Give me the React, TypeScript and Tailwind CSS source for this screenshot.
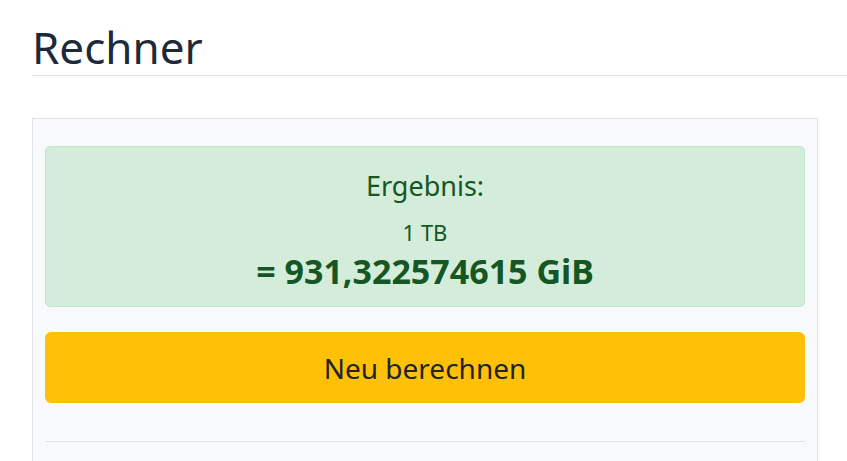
// ── Calculator result page ────────────────────────────────────────────────────
// Heading · result alert · recalculate button

const FONT = "font-['Noto_Sans','Open_Sans',sans-serif]";

export default function App() {
  return (
    <div className={`min-h-screen bg-white ${FONT} pl-8 pr-[29px] overflow-hidden`}>
      {/* ── Heading ── */}
      <h1 className="-mr-[29px] border-b border-[#dee2e6] pt-[19px] text-[44px] leading-[56px] text-[#1c2a3b] h-[76px]">
        Rechner
      </h1>

      {/* ── Card ── */}
      <div className="mt-[42px] border border-[#dee2e6] bg-[#f8f9fa] px-3 pt-[27px] pb-6">
        <div className="rounded-[5px] border border-[#c3e6cb] bg-[#d4edda] text-center text-[#155724] h-[161px] pt-[21px]">
          <div className="text-[27px] leading-[36px]">Ergebnis:</div>
          <div className="mt-[13px] text-[22px] leading-[30px]">1 TB</div>
          <div className="mt-[4px] text-[34px] leading-[40px] font-bold">= 931,322574615 GiB</div>
        </div>

        <button className="mt-[25px] flex h-[71px] w-full items-center justify-center rounded-md bg-[#ffc107] text-[28px] text-[#212529]">
          Neu berechnen
        </button>

        <hr className="mt-[38px] border-t border-[#dee2e6]" />
        <div className="h-10" />
      </div>
    </div>
  );
}
